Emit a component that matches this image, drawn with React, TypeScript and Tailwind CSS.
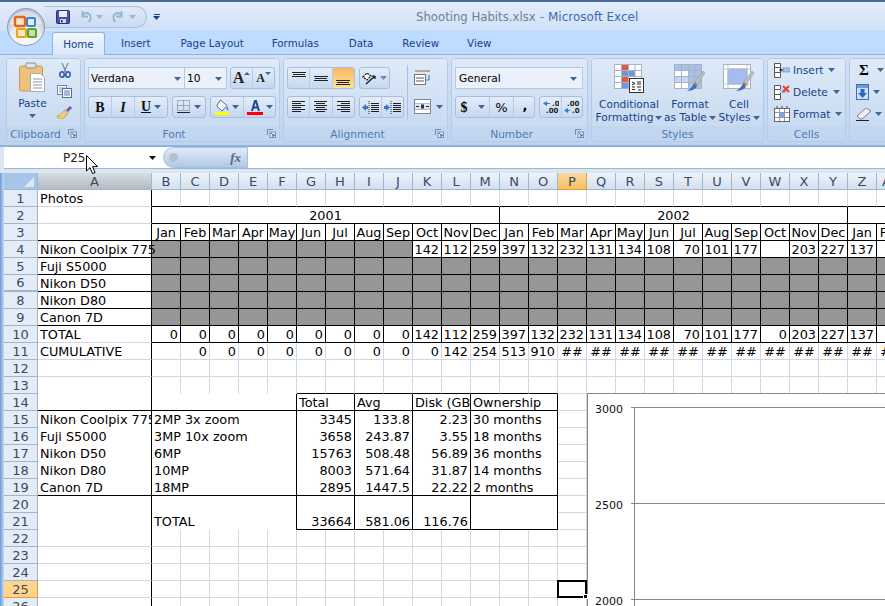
import type { ReactNode } from 'react'

const TAN = '#15428b'

function Arrow({ c = '#3f639b' }: { c?: string }) {
  return (
    <svg width="7" height="4" viewBox="0 0 7 4" className="shrink-0">
      <path d="M0 0h7L3.5 4z" fill={c} />
    </svg>
  )
}

function Launcher() {
  return (
    <svg width="9" height="9" viewBox="0 0 9 9" className="shrink-0">
      <path d="M.5 6V.5H6" fill="none" stroke="#6d8fbd" />
      <rect x="3" y="3" width="5.5" height="5.5" fill="#e4eefa" stroke="#6d8fbd" />
      <path d="M4 4l3 3M7 5v2H5" fill="none" stroke="#3f639b" />
    </svg>
  )
}

function Group({ w, label, launcher, children }: { w: string; label: string; launcher?: boolean; children: ReactNode }) {
  return (
    <div className={`${w} flex h-[84px] shrink-0 flex-col overflow-hidden rounded-[4px] border border-[#b3cbe8]`}>
      <div className="flex h-[67px] bg-linear-to-b from-[#deeaf8] to-[#c9dbf1]">{children}</div>
      <div
        className={`relative flex h-[15px] items-center justify-center bg-[#c2d7ef] pt-[1px] text-[10.6px] leading-none text-[#5079b3] ${
          launcher ? 'pr-[16px]' : ''
        }`}
      >
        {label}
        {launcher && (
          <span className="absolute right-[3px] top-[3px] flex">
            <Launcher />
          </span>
        )}
      </div>
    </div>
  )
}

function BtnGroup({ w, children }: { w: string; children: ReactNode }) {
  return (
    <div className={`${w} flex h-[22px] shrink-0 overflow-hidden rounded-[3px] border border-[#a6bfe0] bg-linear-to-b from-[#e4edf9] to-[#c5d8ef]`}>
      {children}
    </div>
  )
}

function Seg({ w, last, active, children }: { w: string; last?: boolean; active?: boolean; children: ReactNode }) {
  return (
    <div
      className={`${w} flex h-full items-center justify-center gap-[3px] ${last ? '' : 'border-r border-r-[#b5cbe6]'} ${
        active ? 'bg-linear-to-b from-[#f7b668] to-[#ffe08f]' : ''
      }`}
    >
      {children}
    </div>
  )
}

function Lines({ kind }: { kind: 'l' | 'c' | 'r' }) {
  const rows = [0, 1, 2, 3, 4, 5]
  const long = 13
  const short = 9
  return (
    <svg width="14" height="12" viewBox="0 0 14 12">
      {rows.map((i) => {
        const len = i % 2 ? short : long
        const x = kind === 'l' ? 0 : kind === 'c' ? Math.floor((14 - len) / 2) : 14 - len
        return <rect key={i} x={x} y={i * 2} width={len} height="1" fill="#222" />
      })}
    </svg>
  )
}

function VAlign({ top }: { top: number }) {
  return (
    <svg width="14" height="13" viewBox="0 0 14 13">
      {[0, 2, 4].map((y, i) => (
        <rect key={i} x={i % 2 ? 1 : 0} y={top + y} width={i % 2 ? 12 : 14} height="1" fill="#222" />
      ))}
    </svg>
  )
}

function Indent({ dir }: { dir: 'l' | 'r' }) {
  return (
    <svg width="17" height="15" viewBox="0 0 17 15">
      <path d="M7 1v13" stroke="#222" strokeDasharray="1 1" />
      {[3, 5, 7, 9, 11].map((y) => (
        <rect key={y} x="9" y={y} width="8" height="1" fill="#222" />
      ))}
      {dir === 'l' ? (
        <path d="M0 7.5L4 4v2h2v3H4v2z" fill="#3b78c9" />
      ) : (
        <path d="M6 7.5L2 4v2H0v3h2v2z" fill="#3b78c9" />
      )}
    </svg>
  )
}

function OfficeButton() {
  return (
    <svg width="38" height="38" viewBox="0 0 38 38">
      <defs>
        <radialGradient id="orb" cx="50%" cy="85%" r="70%">
          <stop offset="0" stopColor="#fdfdf8" />
          <stop offset="0.6" stopColor="#e9ecef" />
          <stop offset="1" stopColor="#b9c2cf" />
        </radialGradient>
      </defs>
      <circle cx="19" cy="19" r="18.5" fill="url(#orb)" stroke="#8b9bb2" />
      <path d="M3 17a16 14 0 0 1 32 0c-8-3-24-3-32 0z" fill="#fff" opacity="0.45" />
      <rect x="8" y="9" width="10" height="9" rx="1.5" fill="#f6e6c5" stroke="#e8661c" strokeWidth="2.4" />
      <rect x="20" y="10" width="8" height="8" rx="1" fill="#dcebf8" stroke="#3c85c8" strokeWidth="2" />
      <rect x="10" y="21" width="9" height="8" rx="1" fill="#fbeec0" stroke="#eaa41e" strokeWidth="2.2" />
      <rect x="21" y="21" width="8" height="8" rx="1" fill="#c9e2a8" stroke="#5ea338" strokeWidth="2.2" />
    </svg>
  )
}

function SaveIcon() {
  return (
    <svg width="14" height="14" viewBox="0 0 14 14">
      <rect x=".5" y=".5" width="13" height="13" rx="1" fill="#4d4fa8" stroke="#2f2f78" />
      <rect x="3" y="1" width="8" height="6" fill="#e8ecf8" />
      <rect x="4" y="9" width="6" height="4" fill="#d4d6e8" />
      <rect x="5" y="10" width="1.6" height="2.4" fill="#2f2f78" />
    </svg>
  )
}

function UndoIcon({ flip }: { flip?: boolean }) {
  return (
    <svg width="13" height="13" viewBox="0 0 13 13" className={flip ? '-scale-x-100' : ''}>
      <path d="M3.5 1v5.5H9M3.5 5C5 3 8 2.5 10 4s2 5 0 8" fill="none" stroke="#9db2cd" strokeWidth="2" />
    </svg>
  )
}

function PasteIcon() {
  return (
    <svg width="27" height="31" viewBox="0 0 27 31">
      <rect x=".5" y="4" width="23" height="25" rx="2" fill="#eec27d" stroke="#c39a55" />
      <rect x="7" y="1" width="10" height="5" rx="1" fill="#dfe3e8" stroke="#8b8f95" />
      <path d="M11.5 11.5h10l4 4v14h-14z" fill="#fff" stroke="#a7a9ad" />
      <path d="M14 17h9M14 20h9M14 23h9M14 26h9" stroke="#8d939b" />
    </svg>
  )
}

function ScissorsIcon() {
  return (
    <svg width="12" height="15" viewBox="0 0 12 15">
      <path d="M3 0l4 9M9 0L5 9" stroke="#7d8894" strokeWidth="1.2" />
      <ellipse cx="3" cy="11.5" rx="2.2" ry="2.7" fill="none" stroke="#3b62ad" strokeWidth="1.7" />
      <ellipse cx="9" cy="11.5" rx="2.2" ry="2.7" fill="none" stroke="#3b62ad" strokeWidth="1.7" />
    </svg>
  )
}

function CopyIcon() {
  return (
    <svg width="15" height="13" viewBox="0 0 15 13">
      <rect x=".5" y=".5" width="9" height="9" fill="#fff" stroke="#6b85ad" />
      <path d="M2 3h6M2 5h6M2 7h6" stroke="#7f96ba" />
      <rect x="5.5" y="3.5" width="9" height="9" fill="#fff" stroke="#4e6d9e" />
      <path d="M7 6h6M7 8h6M7 10h6" stroke="#4f78b4" />
    </svg>
  )
}

function PainterIcon() {
  return (
    <svg width="17" height="14" viewBox="0 0 17 14">
      <path d="M10 5l4-4 2 2-4 4z" fill="#6f5fa8" />
      <path d="M1 11c3 0 5-4 8-6l3 3c-2 3-4 6-7 6-2 0-4-1-4-3z" fill="#eccd72" stroke="#b6913f" strokeWidth=".7" />
    </svg>
  )
}

function PaintBucket() {
  return (
    <svg width="14" height="16" viewBox="0 0 14 16">
      <path d="M5.5 1L12 6.5 7 12 1.5 7z" fill="#f4f7fb" stroke="#5a6f8f" />
      <path d="M12 7c1 2 2 3 1 4s-2-1-1-4z" fill="#3b78c9" />
      <rect x="0" y="13" width="14" height="3" fill="#ffff00" />
    </svg>
  )
}

function ColorA() {
  return (
    <svg width="16" height="16" viewBox="0 0 16 16">
      <path d="M5 12L8 2h1l3 10M6 8.5h5" fill="none" stroke="#23448f" strokeWidth="2" />
      <rect x="0" y="13" width="16" height="3" fill="#ff0000" />
    </svg>
  )
}

function BordersIcon() {
  return (
    <svg width="14" height="14" viewBox="0 0 14 14">
      <path d="M.5.5h12v10H.5zM6.5.5v10M.5 5.5h12" fill="none" stroke="#6a7585" strokeDasharray="1 1" />
      <rect x="0" y="12" width="13" height="1" fill="#222" />
    </svg>
  )
}

function CellGrid({ fill }: { fill: ReactNode }) {
  return (
    <>
      <rect x=".5" y=".5" width="27" height="24" fill="#fff" stroke="#a8b3c2" />
      {fill}
      <path d="M7.5 1v23M14.5 1v23M21 1v23M1 6.5h26M1 12.5h26M1 18.5h26" stroke="#a8b3c2" />
    </>
  )
}

function Brush() {
  return (
    <>
      <path d="M29 7l2 2-8 12-3-2z" fill="#b9bdc4" stroke="#8f949c" strokeWidth=".5" />
      <path d="M21 18l3 3-3 2-2-2z" fill="#a5813f" />
      <path d="M20 20l3 3c-3 3-7 4-10 4 3-2 5-4 7-7z" fill="#3a70c4" />
    </>
  )
}

function CondIcon() {
  return (
    <svg width="30" height="29" viewBox="0 0 30 29">
      <CellGrid
        fill={
          <>
            <rect x="8" y="1" width="7" height="23" fill="#e8563e" />
            <rect x="8" y="7" width="13" height="6" fill="#6d98dc" />
            <rect x="8" y="19" width="7" height="5" fill="#6d98dc" />
          </>
        }
      />
      <rect x="15.5" y="14.5" width="14" height="14" fill="#fff" stroke="#333" />
      <path d="M18 18l3 1.5-3 1.5M18 23h3M23 18h4M23 20h4M23 23h4M24 26h3M18 25.5h3" stroke="#222" fill="none" />
    </svg>
  )
}

function TableIcon() {
  return (
    <svg width="32" height="29" viewBox="0 0 32 29">
      <CellGrid
        fill={
          <>
            <rect x="1" y="1" width="26" height="6" fill="#a9c0e8" />
            <rect x="1" y="13" width="26" height="6" fill="#c7d6f2" />
            <rect x="15" y="7" width="12" height="17" fill="#a9c0e8" />
          </>
        }
      />
      <Brush />
    </svg>
  )
}

function StyleIcon() {
  return (
    <svg width="32" height="29" viewBox="0 0 32 29">
      <rect x=".5" y=".5" width="27" height="24" fill="#fff" stroke="#a8b3c2" />
      <rect x="5" y="5" width="19" height="15" fill="#a4bdf0" stroke="#7d9bd6" />
      <path d="M5 1v23M24 1v23M1 5h26M1 20h26" stroke="#c0c8d4" />
      <Brush />
    </svg>
  )
}

function InsertIcon() {
  return (
    <svg width="16" height="15" viewBox="0 0 16 15">
      <path d="M.5.5h6v4h-6zM.5 4.5h6v5h-6zM.5 9.5h6v5h-6z" fill="#fff" stroke="#555" />
      <rect x="9" y="5" width="7" height="4" fill="#a8c4ec" stroke="#5b7fb5" strokeWidth=".6" />
      <path d="M5 7h4M7 5.5v3" stroke="#222" />
    </svg>
  )
}

function DeleteIcon() {
  return (
    <svg width="16" height="15" viewBox="0 0 16 15">
      <path d="M.5.5h6v4h-6zM.5 4.5h6v5h-6zM.5 9.5h6v5h-6z" fill="#fff" stroke="#555" />
      <rect x="6" y="4" width="6" height="4" fill="#a8c4ec" />
      <path d="M9 1l6 6M15 1L9 7" stroke="#e2452c" strokeWidth="2" />
    </svg>
  )
}

function FormatIcon() {
  return (
    <svg width="16" height="16" viewBox="0 0 16 16">
      <rect x=".5" y="2.5" width="15" height="13" fill="#fff" stroke="#666" />
      <rect x="5" y="7" width="6" height="4" fill="#7fa6e2" />
      <path d="M5.5 3v12M10.5 3v12M1 6.5h14M1 11.5h14" stroke="#8d96a3" />
      <path d="M3 0v2M8 0v2M13 0v2" stroke="#444" />
    </svg>
  )
}

function FillDown() {
  return (
    <svg width="13" height="16" viewBox="0 0 13 16">
      <rect x=".5" y=".5" width="12" height="15" fill="#cfe0f6" stroke="#3b6fb8" />
      <rect x="1" y="1" width="11" height="3" fill="#6f9bdc" />
      <path d="M4.5 5h4v4H11l-4.5 5L2 9h2.5z" fill="#2d69c4" />
    </svg>
  )
}

function Eraser() {
  return (
    <svg width="17" height="15" viewBox="0 0 17 15">
      <path d="M1 9l8-7c1-1 2-1 3 0l3 2-9 8H4z" fill="#f1f3f6" stroke="#79818c" />
      <rect x="0" y="13" width="13" height="1" fill="#222" />
    </svg>
  )
}

function Ribbon() {
  return (
    <div className="flex h-[90px] gap-[3px] overflow-hidden bg-linear-to-b from-[#cfe1f7] to-[#bdd4ef] pl-[6px] pt-[3px]">
      <Group w="w-[75px]" label="Clipboard" launcher>
        <div className="flex w-[49px] flex-col items-center pl-[2px] pt-[3px]">
          <PasteIcon />
          <span className="mt-[4px] text-[10.6px] leading-[13px] text-[#15428b]">Paste</span>
          <span className="mt-[4px] flex">
            <Arrow />
          </span>
        </div>
        <div className="flex flex-col items-center gap-[7px] pt-[4px]">
          <ScissorsIcon />
          <CopyIcon />
          <PainterIcon />
        </div>
      </Group>
      <Group w="w-[196px]" label="Font" launcher>
        <div className="flex flex-col gap-[7px] pl-[3px] pt-[8px]">
          <div className="flex">
            <div className="flex h-[22px] w-[97px] items-center justify-between border border-[#b4c9e5] bg-[#eaf1fb] pl-[2px] pr-[3px] pt-[1px] text-[10.6px]">
              Verdana
              <Arrow />
            </div>
            <div className="ml-[-1px] flex h-[22px] w-[43px] items-center justify-between border border-[#b4c9e5] bg-[#eaf1fb] pl-[2px] pr-[4px] pt-[1px] text-[10.6px]">
              10
              <Arrow />
            </div>
            <div className="ml-[3px]">
              <BtnGroup w="w-[45px]">
                <Seg w="w-[23px]">
                  <span className="relative font-['Liberation_Serif',serif] text-[16px] font-bold leading-none text-[#222]">A</span>
                  <span className="mb-[10px] ml-[-3px] h-0 w-0 border-x-[3px] border-b-[3px] border-x-transparent border-b-[#3f639b]" />
                </Seg>
                <Seg w="w-[22px]" last>
                  <span className="font-['Liberation_Serif',serif] text-[12px] font-bold leading-none text-[#222]">A</span>
                  <span className="mb-[10px] ml-[-3px] h-0 w-0 border-x-[3px] border-t-[3px] border-x-transparent border-t-[#3f639b]" />
                </Seg>
              </BtnGroup>
            </div>
          </div>
          <div className="flex gap-[4px]">
            <BtnGroup w="w-[80px]">
              <Seg w="w-[23px]">
                <span className="font-['Liberation_Serif',serif] text-[14px] font-bold text-[#111]">B</span>
              </Seg>
              <Seg w="w-[23px]">
                <span className="font-['Liberation_Serif',serif] text-[14px] font-bold italic text-[#111]">I</span>
              </Seg>
              <Seg w="w-[32px]" last>
                <span className="font-['Liberation_Serif',serif] text-[14px] font-bold leading-none text-[#111] underline">U</span>
                <Arrow />
              </Seg>
            </BtnGroup>
            <BtnGroup w="w-[34px]">
              <Seg w="w-full" last>
                <BordersIcon />
                <Arrow />
              </Seg>
            </BtnGroup>
            <BtnGroup w="w-[66px]">
              <Seg w="w-[33px]">
                <PaintBucket />
                <Arrow />
              </Seg>
              <Seg w="w-[31px]" last>
                <ColorA />
                <Arrow />
              </Seg>
            </BtnGroup>
          </div>
        </div>
      </Group>
      <Group w="w-[165px]" label="Alignment" launcher>
        <div className="flex flex-col gap-[7px] pl-[3px] pt-[8px]">
          <div className="flex gap-[4px]">
            <BtnGroup w="w-[68px]">
              <Seg w="w-[23px]">
                <VAlign top={0} />
              </Seg>
              <Seg w="w-[23px]">
                <VAlign top={4} />
              </Seg>
              <Seg w="w-[22px]" last active>
                <VAlign top={8} />
              </Seg>
            </BtnGroup>
            <BtnGroup w="w-[31px]">
              <Seg w="w-full" last>
                <svg width="15" height="13" viewBox="0 0 15 13">
                  <path d="M1 5l4-4 4 3-4 4z" fill="#f4f7fb" stroke="#111" strokeWidth="1.2" strokeDasharray="2 1" />
                  <path d="M4 12L13 4M13 4h-3M13 4v3" fill="none" stroke="#111" strokeWidth="1.2" />
                </svg>
                <Arrow c="#6f8bb5" />
              </Seg>
            </BtnGroup>
          </div>
          <div className="flex gap-[4px]">
            <BtnGroup w="w-[68px]">
              <Seg w="w-[23px]">
                <Lines kind="l" />
              </Seg>
              <Seg w="w-[23px]">
                <Lines kind="c" />
              </Seg>
              <Seg w="w-[22px]" last>
                <Lines kind="r" />
              </Seg>
            </BtnGroup>
            <BtnGroup w="w-[45px]">
              <Seg w="w-[23px]">
                <Indent dir="l" />
              </Seg>
              <Seg w="w-[22px]" last>
                <Indent dir="r" />
              </Seg>
            </BtnGroup>
          </div>
        </div>
        <div className="ml-[3px] mt-[6px] h-[54px] w-px bg-[#a9c1de]" />
        <div className="flex flex-col gap-[14px] pl-[6px] pt-[11px]">
          <svg width="17" height="15" viewBox="0 0 17 15">
            <path d="M1 1h15M1 6h10M1 10h10M1 14h10" stroke="#8d6b3a" />
            <rect x=".5" y="4.5" width="11" height="10" fill="#fff" stroke="#777" />
            <path d="M2 8h8M2 11h8" stroke="#555" />
            <path d="M15 5v5h-3" fill="none" stroke="#3b78c9" />
          </svg>
          <div className="flex items-center gap-[5px]">
            <svg width="17" height="15" viewBox="0 0 17 15">
              <rect x=".5" y=".5" width="16" height="14" fill="#fff" stroke="#7d8792" />
              <path d="M1 4.5h15M1 10.5h15" stroke="#b4bcc6" />
              <rect x="1" y="5" width="15" height="5" fill="#dfe7f2" />
              <path d="M2 7.5h3M12 7.5h3" stroke="#222" />
              <rect x="7" y="5.5" width="3" height="4" fill="#333" />
            </svg>
            <Arrow />
          </div>
        </div>
      </Group>
      <Group w="w-[137px]" label="Number" launcher>
        <div className="flex flex-col gap-[7px] pl-[3px] pt-[8px]">
          <div className="flex h-[22px] w-[128px] items-center justify-between border border-[#b4c9e5] bg-[#eaf1fb] pl-[3px] pr-[5px] pt-[1px] text-[10.6px]">
            General
            <Arrow />
          </div>
          <div className="flex gap-[4px]">
            <BtnGroup w="w-[80px]">
              <Seg w="w-[34px]">
                <span className="font-['Liberation_Serif',serif] text-[14px] font-bold">$</span>
                <span className="ml-[7px] flex">
                  <Arrow />
                </span>
              </Seg>
              <Seg w="w-[24px]">
                <span className="text-[13px] leading-none">%</span>
              </Seg>
              <Seg w="w-[20px]" last>
                <span className="ml-[2px] mt-[-4px] text-[13px] font-bold leading-none">,</span>
              </Seg>
            </BtnGroup>
            <BtnGroup w="w-[44px]">
              <Seg w="w-[22px]">
                <svg width="16" height="14" viewBox="0 0 16 14">
                  <path d="M0 3.5L4 1v2h3v1H4v2z" fill="#3b78c9" />
                  <text x="9" y="6" fontSize="7" fontWeight="700" fill="#222">.0</text>
                  <text x="3" y="13" fontSize="7" fontWeight="700" fill="#222">.00</text>
                </svg>
              </Seg>
              <Seg w="w-[20px]" last>
                <svg width="16" height="14" viewBox="0 0 16 14">
                  <text x="3" y="6" fontSize="7" fontWeight="700" fill="#222">.00</text>
                  <path d="M6 10.5L2 8v2H0v1h2v2z" fill="#3b78c9" transform="matrix(-1 0 0 1 6 0)" />
                  <text x="8" y="13" fontSize="7" fontWeight="700" fill="#222">.0</text>
                </svg>
              </Seg>
            </BtnGroup>
          </div>
        </div>
      </Group>
      <Group w="w-[173px]" label="Styles">
        <div className="flex w-[74px] shrink-0 flex-col items-center pt-[5px]">
          <CondIcon />
          <span className="mt-[5px] whitespace-nowrap text-[10.6px] leading-[13px] text-[#15428b]">Conditional</span>
          <span className="flex items-center gap-[2px] whitespace-nowrap text-[10.6px] leading-[13px] text-[#15428b]">
            Formatting
            <Arrow />
          </span>
        </div>
        <div className="flex w-[48px] shrink-0 flex-col items-center pt-[5px]">
          <TableIcon />
          <span className="mt-[5px] whitespace-nowrap text-[10.6px] leading-[13px] text-[#15428b]">Format</span>
          <span className="flex items-center gap-[2px] whitespace-nowrap text-[10.6px] leading-[13px] text-[#15428b]">
            as Table
            <Arrow />
          </span>
        </div>
        <div className="flex w-[50px] shrink-0 flex-col items-center pt-[5px]">
          <StyleIcon />
          <span className="mt-[5px] whitespace-nowrap text-[10.6px] leading-[13px] text-[#15428b]">Cell</span>
          <span className="flex items-center gap-[2px] whitespace-nowrap text-[10.6px] leading-[13px] text-[#15428b]">
            Styles
            <Arrow />
          </span>
        </div>
      </Group>
      <Group w="w-[79px]" label="Cells">
        <div className="flex flex-col gap-[6px] pl-[6px] pt-[3px] text-[10.6px] leading-[16px] text-[#15428b]">
          <div className="flex h-[16px] items-center gap-[3px]">
            <InsertIcon />
            Insert
            <span className="ml-[2px] flex">
              <Arrow />
            </span>
          </div>
          <div className="flex h-[16px] items-center gap-[3px]">
            <DeleteIcon />
            Delete
            <span className="ml-[2px] flex">
              <Arrow />
            </span>
          </div>
          <div className="flex h-[16px] items-center gap-[3px]">
            <FormatIcon />
            Format
            <span className="ml-[2px] flex">
              <Arrow />
            </span>
          </div>
        </div>
      </Group>
      <Group w="w-[60px]" label="">
        <div className="flex flex-col gap-[6px] pl-[6px] pt-[3px]">
          <div className="flex h-[16px] items-center gap-[8px] pl-[3px]">
            <span className="font-['Liberation_Serif',serif] text-[15px] font-bold leading-none">Σ</span>
            <Arrow />
          </div>
          <div className="flex h-[16px] items-center gap-[4px]">
            <FillDown />
            <Arrow />
          </div>
          <div className="flex h-[16px] items-center gap-[2px]">
            <Eraser />
            <Arrow />
          </div>
        </div>
      </Group>
    </div>
  )
}

const GRID_R: Record<string, string> = {
  l: 'border-r border-r-[#d0d7e5]',
  k: 'border-r border-r-black',
  n: '',
}
const GRID_B: Record<string, string> = {
  l: 'border-b border-b-[#d0d7e5]',
  k: 'border-b border-b-black',
  n: '',
}
const SPAN: Record<number, string> = {
  1: '',
  2: 'col-span-2',
  3: 'col-span-3',
  5: 'col-span-5',
  12: 'col-span-12',
}
const ALIGN = { l: 'text-left pl-[2px]', r: 'text-right pr-[2px]', c: 'text-center' }

type Cell = {
  t?: string
  s?: number
  a?: 'l' | 'r' | 'c'
  r?: string
  b?: string
  gray?: boolean
  over?: boolean
}

const COLS = 'BCDEFGHIJKLMNOPQRSTUVWXYZ'.split('').concat('AA')
const MONTHS = ['Jan', 'Feb', 'Mar', 'Apr', 'May', 'Jun', 'Jul', 'Aug', 'Sep', 'Oct', 'Nov', 'Dec']
const ROWS = [1, 2, 3, 4, 5, 6, 8, 9, 10, 11, 12, 13, 14, 15, 16, 17, 18, 19, 20, 21, 22, 23, 24, 25, 26]
const COUNTS = ['142', '112', '259', '397', '132', '232', '131', '134', '108', '70', '101', '177']

function light(n: number): Cell[] {
  return Array.from({ length: n }, () => ({ r: 'l', b: 'l' }))
}

const TABLE: Record<number, [string, string, string, string, string, string]> = {
  15: ['Nikon Coolpix 775', '2MP 3x zoom', '3345', '133.8', '2.23', '30 months'],
  16: ['Fuji S5000', '3MP 10x zoom', '3658', '243.87', '3.55', '18 months'],
  17: ['Nikon D50', '6MP', '15763', '508.48', '56.89', '36 months'],
  18: ['Nikon D80', '10MP', '8003', '571.64', '31.87', '14 months'],
  19: ['Canon 7D', '18MP', '2895', '1447.5', '22.22', '2 months'],
  20: ['', '', '', '', '', ''],
  21: ['', 'TOTAL', '33664', '581.06', '116.76', ''],
}

function colA(row: number): Cell {
  const names: Record<number, string> = {
    1: 'Photos',
    4: 'Nikon Coolpix 775',
    5: 'Fuji S5000',
    6: 'Nikon D50',
    8: 'Nikon D80',
    9: 'Canon 7D',
    10: 'TOTAL',
    11: 'CUMULATIVE',
  }
  let b = 'l'
  if (row >= 3 && row <= 9) b = 'k'
  if (row === 13) b = 'n'
  if (row === 14 || row === 19) b = 'k'
  if (row >= 15 && row <= 21 && row !== 19) b = 'n'
  return { t: names[row] ?? (TABLE[row] ? TABLE[row][0] : ''), a: 'l', r: 'k', b, over: row === 4 }
}

function cellsFor(row: number): Cell[] {
  const k = { r: 'k', b: 'k' }
  if (row === 1) return COLS.map(() => ({ r: 'l', b: 'k' }))
  if (row === 2)
    return [
      { t: '2001', s: 12, a: 'c', ...k },
      { t: '2002', s: 12, a: 'c', ...k },
      { s: 2, ...k },
    ]
  if (row === 3) return COLS.map((_, i) => ({ t: MONTHS[i % 12], a: 'c', ...k }))
  if (row === 4 || row === 10)
    return COLS.map((_, i) => {
      if (i < 9) return row === 4 ? { gray: true, ...k } : { t: '0', a: 'r', ...k }
      const rest: Record<number, string> = { 21: row === 4 ? '' : '0', 22: '203', 23: '227', 24: '137' }
      return { t: i < 21 ? COUNTS[i - 9] : rest[i], a: 'r', ...k }
    })
  if (row === 5 || row === 6 || row === 8 || row === 9) return COLS.map(() => ({ gray: true, ...k }))
  if (row === 11)
    return COLS.map((_, i) => {
      const early = ['', '0', '0', '0', '0', '0', '0', '0', '0', '0', '142', '254', '513', '910']
      if (i < early.length) return { t: early[i], a: 'r', r: 'l', b: 'l' }
      return { t: '##', a: 'c', r: 'l', b: 'l' }
    })
  if (row === 13)
    return COLS.map((_, i) => {
      if (i < 5) return { r: 'l', b: 'n' }
      if (i < 14) return { r: 'l', b: 'k' }
      return { r: 'l', b: 'l' }
    })
  if (row === 14)
    return [
      { s: 5, ...k },
      { t: 'Total', s: 2, a: 'l', ...k },
      { t: 'Avg', s: 2, a: 'l', ...k },
      { t: 'Disk (GB', s: 2, a: 'l', ...k },
      { t: 'Ownership', s: 3, a: 'l', ...k },
      ...light(12),
    ]
  if (TABLE[row]) {
    const [, spec, total, avg, disk, own] = TABLE[row]
    const left = row === 19 ? 'k' : 'n'
    const mid = row === 19 || row === 21 ? 'k' : 'n'
    return [
      { t: spec, s: 5, a: 'l', r: 'k', b: left },
      { t: total, s: 2, a: 'r', r: 'k', b: mid },
      { t: avg, s: 2, a: 'r', r: 'k', b: mid },
      { t: disk, s: 2, a: 'r', r: 'k', b: mid },
      { t: own, s: 3, a: 'l', r: 'k', b: mid },
      ...light(12),
    ]
  }
  return light(COLS.length)
}

function SheetCell({ c }: { c: Cell }) {
  return (
    <div
      className={`${SPAN[c.s ?? 1]} ${GRID_R[c.r ?? 'l']} ${GRID_B[c.b ?? 'l']} ${ALIGN[c.a ?? 'l']} ${
        c.gray ? 'bg-[#969696]' : ''
      } ${c.over ? 'relative z-10 overflow-visible' : 'overflow-hidden'} h-[17px] whitespace-nowrap text-[12.8px] leading-[18px] text-black`}
    >
      {c.t}
    </div>
  )
}

function Chart() {
  const grid = [
    { y: 13.5, t: '3000' },
    { y: 109.5, t: '2500' },
    { y: 205.5, t: '2000' },
  ]
  return (
    <div className="absolute left-[587px] top-[220px] h-[300px] w-[400px] border-l border-t border-[#868686] bg-white">
      <svg width="399" height="299" viewBox="0 0 399 299">
        <path d="M46.5 13v286" stroke="#868686" />
        {grid.map((g) => (
          <g key={g.t}>
            <path d={`M43 ${g.y}H399`} stroke="#868686" />
            <text x="35" y={g.y + 5} textAnchor="end" fontSize="11" fontFamily="DejaVu Sans" fill="#111">
              {g.t}
            </text>
          </g>
        ))}
      </svg>
    </div>
  )
}

function Sheet() {
  return (
    <div className="relative flex h-[433px] overflow-hidden bg-white">
      <div className="w-[4px] shrink-0 bg-linear-to-r from-[#6f9ad4] to-[#c6daf3]" />
      <div className="grid shrink-0 grid-cols-[34px_114px_repeat(26,29px)] auto-rows-[17px]">
        <div className="relative border-b border-r border-[#9eb6ce] bg-[#a9c4e9]">
          <span className="absolute bottom-[2px] right-[3px] h-0 w-0 border-b-[10px] border-l-[10px] border-b-[#dde8f6] border-l-transparent" />
        </div>
        <div className="flex items-center justify-center border-b border-r border-[#9eb6ce] bg-linear-to-b from-[#d7dce2] to-[#b4bbc4] text-[13px] leading-none text-[#3b4a5f]">
          A
        </div>
        {COLS.map((c) => (
          <div
            key={c}
            className={
              c === 'P'
                ? 'flex items-center justify-center overflow-hidden border-b border-r border-[#f29536] bg-linear-to-b from-[#f9d99f] to-[#f1c15f] text-[13px] leading-none text-[#3b4a5f]'
                : 'flex items-center justify-center overflow-hidden border-b border-r border-[#9eb6ce] bg-linear-to-b from-[#eef3fa] to-[#d3e0f0] text-[13px] leading-none text-[#3b4a5f]'
            }
          >
            {c}
          </div>
        ))}
        {ROWS.map((row) => (
          <div key={row} className="contents">
            <div
              className={
                row === 25
                  ? 'flex items-center justify-center border-b border-r border-[#f29536] bg-[#ffd58d] text-[13px] leading-none text-[#3b4a5f]'
                  : row === 6
                    ? 'flex items-center justify-center border-b-2 border-r border-[#9eb6ce] bg-[#e4ecf7] text-[13px] leading-none text-[#3b4a5f]'
                    : 'flex items-center justify-center border-b border-r border-[#9eb6ce] bg-[#e4ecf7] text-[13px] leading-none text-[#3b4a5f]'
              }
            >
              {row}
            </div>
            <SheetCell c={colA(row)} />
            {cellsFor(row).map((c, i) => (
              <SheetCell key={i} c={c} />
            ))}
          </div>
        ))}
      </div>
      <Chart />
      <div className="absolute left-[557px] top-[407px] h-[18px] w-[30px] border-2 border-black">
        <span className="absolute bottom-[-3px] right-[-3px] h-[5px] w-[5px] border border-white bg-black" />
      </div>
    </div>
  )
}

export default function App() {
  return (
    <div className="relative h-[606px] w-[885px] overflow-hidden bg-[#c6daf3] font-['DejaVu_Sans',sans-serif]">
      {/* title bar */}
      <div className="relative flex h-[31px] items-center border-t-2 border-t-[#4c6b97] bg-linear-to-b from-[#e3edfb] to-[#cfe1f8]">
        <div className="ml-[44px] flex h-[22px] w-[103px] items-center rounded-r-[11px] border border-l-0 border-[#a9c3e4] bg-linear-to-b from-[#dfeafa] to-[#c8dbf4] pl-[12px]">
          <SaveIcon />
          <span className="ml-[9px] flex">
            <UndoIcon />
          </span>
          <span className="ml-[4px] flex">
            <Arrow c="#9db2cd" />
          </span>
          <span className="ml-[9px] flex">
            <UndoIcon flip />
          </span>
          <span className="ml-[4px] flex">
            <Arrow c="#9db2cd" />
          </span>
        </div>
        <div className="ml-[6px] flex flex-col items-center gap-[1px]">
          <span className="h-[1px] w-[6px] bg-[#15428b]" />
          <Arrow c={TAN} />
        </div>
        <div className="absolute left-[416px] top-[6px] whitespace-nowrap text-[12px] leading-[18px] text-[#3e6bab]">
          <span className="text-[11.7px] text-[#6f7f92]">Shooting Habits.xlsx</span>
          <span className="ml-[4px] mr-[4px] text-[#6f7f92]">-</span>
          Microsoft Excel
        </div>
      </div>
      {/* tabs */}
      <div className="flex h-[24px] items-end border-b border-b-[#8db2e3] bg-[#bfdbff] pl-[52px] text-[10.3px] leading-none text-[#15428b]">
        <div className="mb-[-1px] flex h-[23px] w-[53px] items-center justify-center rounded-t-[3px] border border-b-0 border-[#8db2e3] bg-linear-to-b from-[#f2f7fd] to-[#d8e6f7]">
          Home
        </div>
        <div className="ml-[16px] flex h-[22px] items-center">Insert</div>
        <div className="ml-[30px] flex h-[22px] items-center">Page Layout</div>
        <div className="ml-[28px] flex h-[22px] items-center">Formulas</div>
        <div className="ml-[30px] flex h-[22px] items-center">Data</div>
        <div className="ml-[29px] flex h-[22px] items-center">Review</div>
        <div className="ml-[28px] flex h-[22px] items-center">View</div>
      </div>
      <Ribbon />
      {/* formula bar */}
      <div className="h-[28px] border-t-2 border-t-[#8fb3dc] bg-[#dbe6f4]">
        <div className="ml-[4px] flex h-[22px] border-b border-b-[#9eb6ce] bg-white">
          <div className="flex w-[159px] items-center text-[12px] leading-none text-[#222]">
            <span className="ml-[59px] w-[86px]">P25</span>
            <svg width="7" height="4" viewBox="0 0 7 4">
              <path d="M0 0h7L3.5 4z" fill="#111" />
            </svg>
          </div>
          <div className="flex w-[85px] items-center justify-between rounded-l-[11px] border border-[#a3bfe1] bg-linear-to-b from-[#e2ebf8] to-[#afc8e8] pl-[5px] pr-[6px]">
            <span className="h-[9px] w-[9px] rounded-full bg-[#b8bfc8]" />
            <span className="font-['Liberation_Serif',serif] text-[13px] font-bold italic leading-none text-[#5d6875]">fx</span>
          </div>
        </div>
        <div className="h-[3px]" />
      </div>
      <Sheet />
      {/* mouse pointer */}
      <svg width="14" height="22" viewBox="0 0 14 22" className="absolute left-[86px] top-[155px] z-20">
        <path d="M.5.5v15.5l3.5-3.4 2.5 6 2.6-1.1-2.5-5.9h5z" fill="#fff" stroke="#000" />
      </svg>
      <div className="absolute left-0 top-0 h-[45px] w-[44px] pl-[7px] pt-[8px]">
        <OfficeButton />
      </div>
    </div>
  )
}
